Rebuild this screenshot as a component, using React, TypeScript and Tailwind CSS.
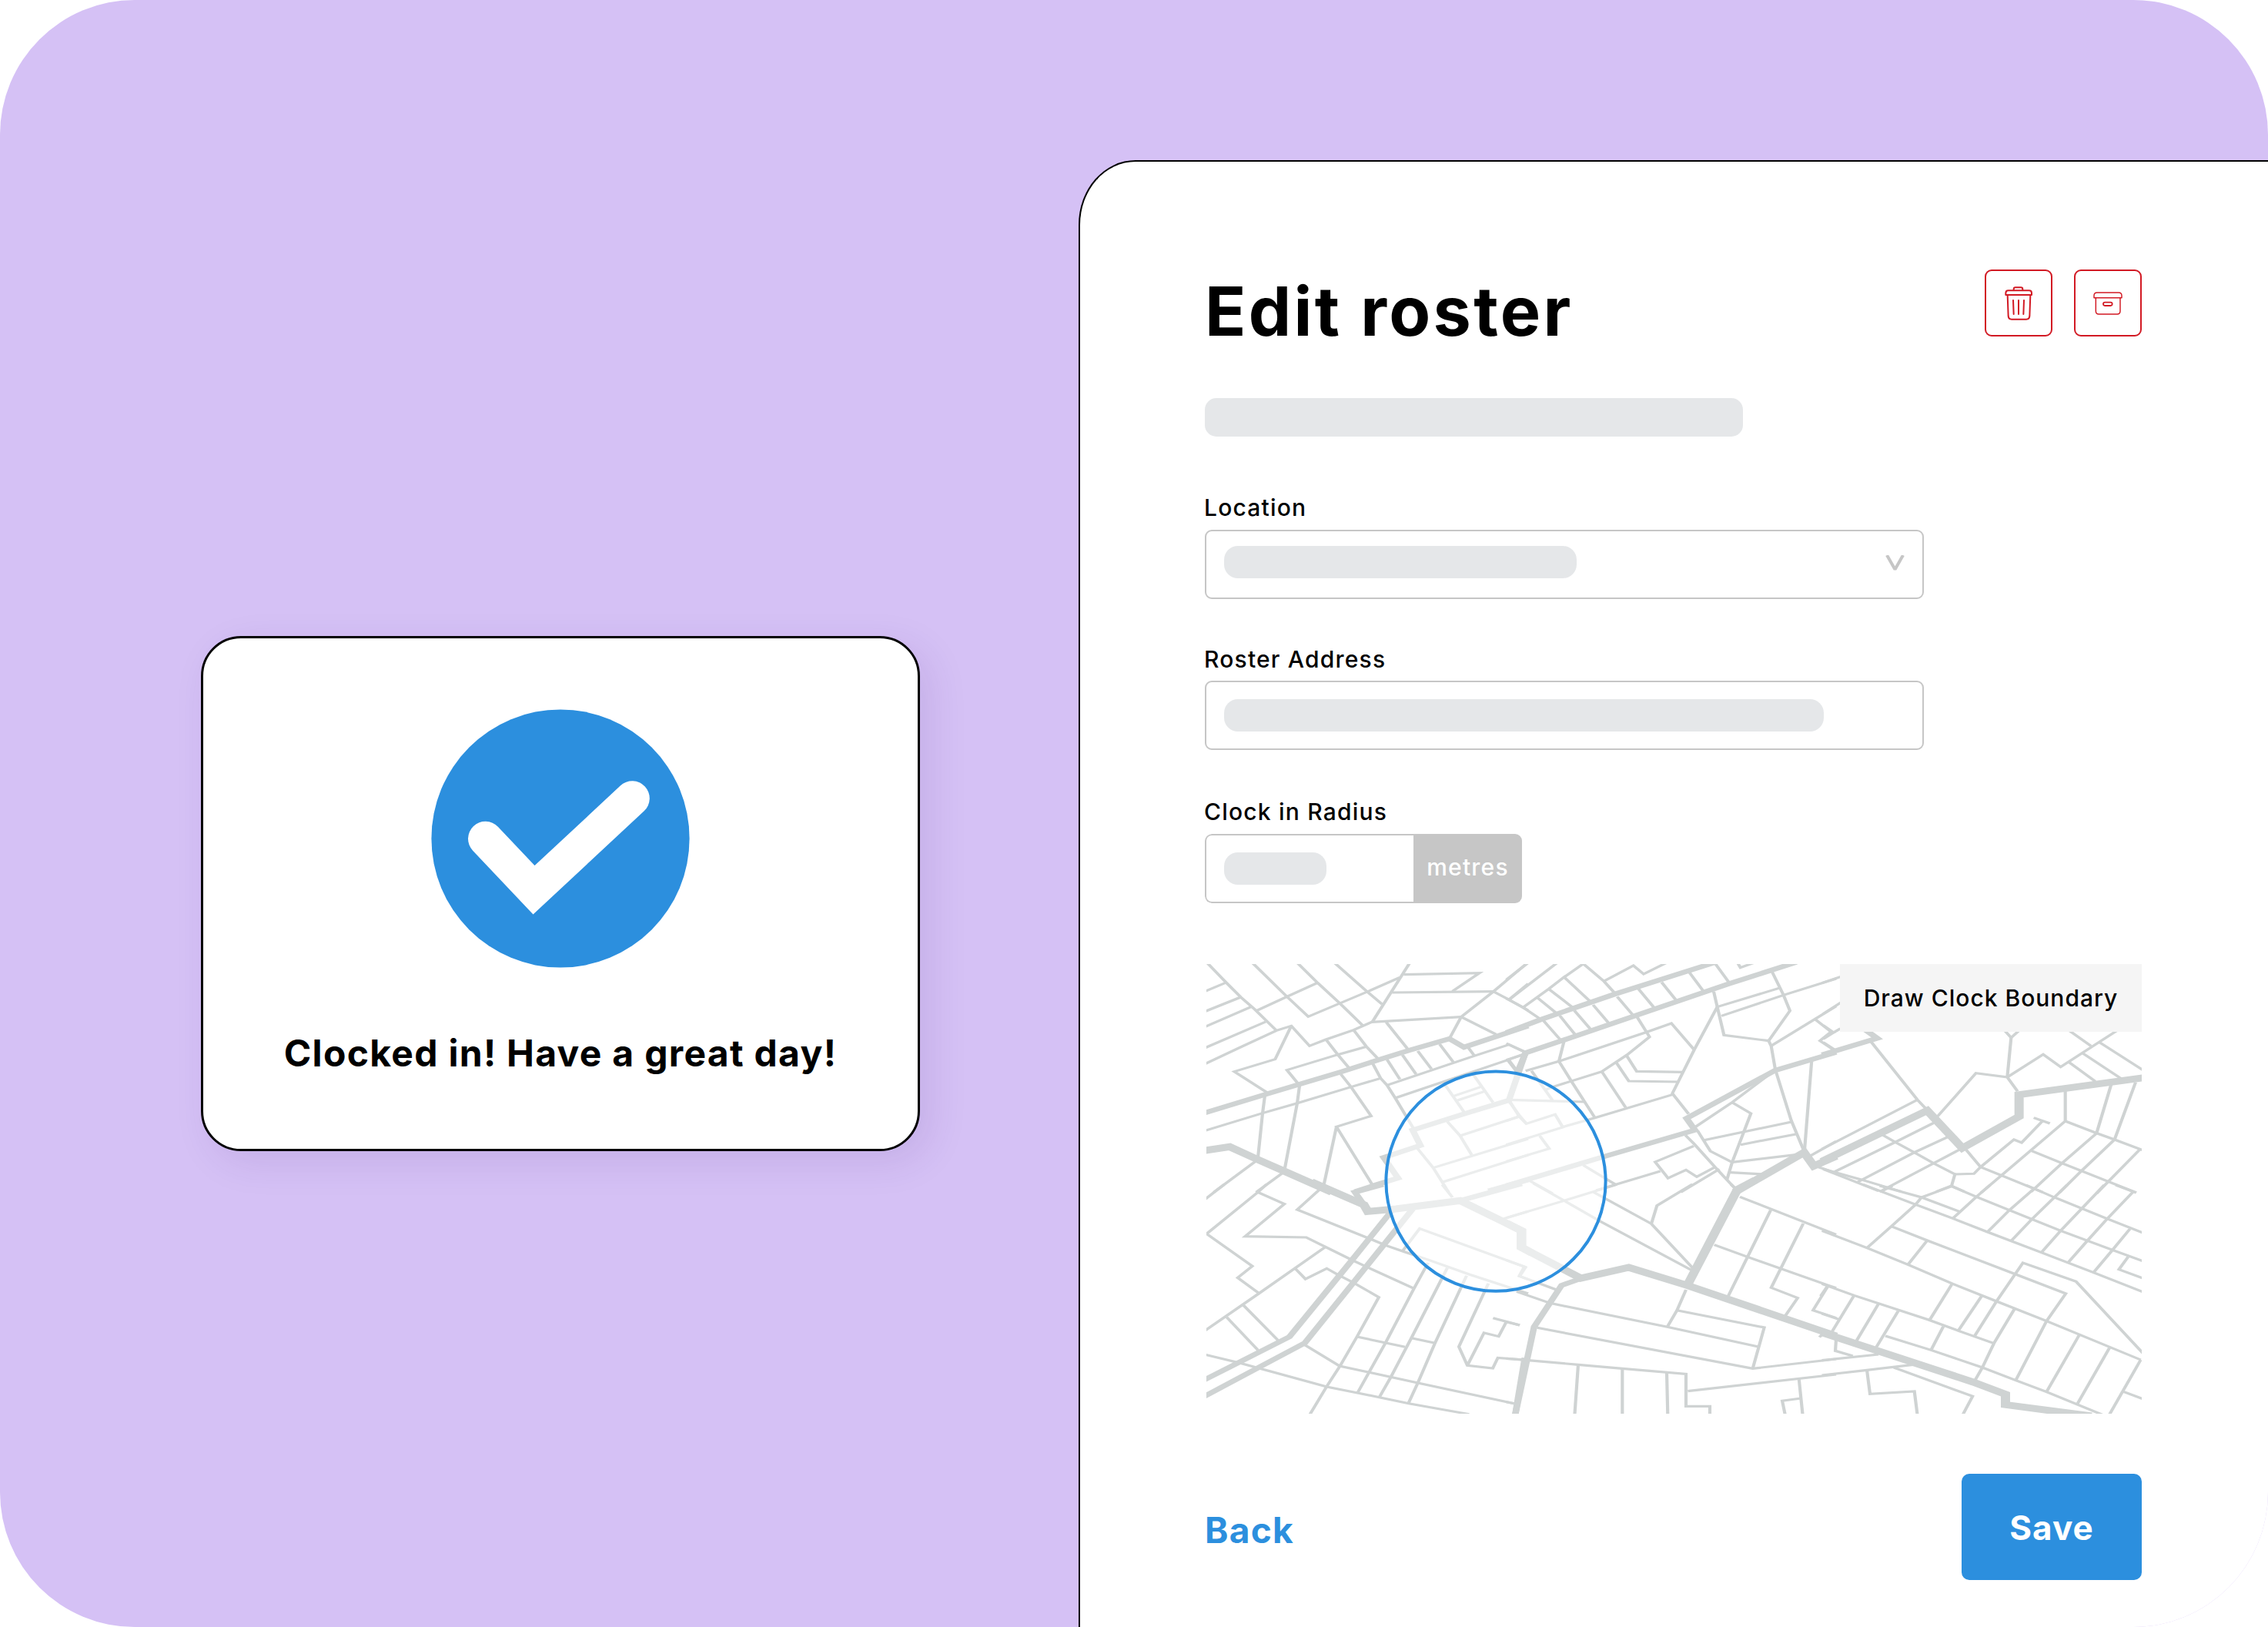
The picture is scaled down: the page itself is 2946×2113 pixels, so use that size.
import React from "react";

/* Street map: every tile holds its streets in tile units (3 units = 1px). */
type Tile = { x: number; y: number; thin: string[]; medium: string[]; thick: string[] };

const tiles: Tile[] = [
  {
    x: 1560,
    y: 1245,
    thin: [
      "22,14 98,93 155,150 210,198 294,280",
      "10,130 98,93",
      "10,208 155,150",
      "10,268 195,188",
      "10,350 252,246",
      "10,413 150,347 294,280 352,262 423,340 487,315 595,278 665,247 1014,227",
      "352,262 289,392 130,440 258,522",
      "200,16 335,148 418,226 541,174 648,129 775,73",
      "375,16 454,94 541,174 630,260",
      "520,16 648,129 706,178",
      "815,14 668,246",
      "218,202 335,148 454,94",
      "790,62 1085,56 980,127",
      "745,132 1140,128",
      "1275,14 1140,128 1014,227 968,312",
      "1014,227 1150,295",
      "1140,128 1200,160 1275,202",
      "1200,160 1275,98",
      "645,343 533,374 335,434 381,490",
      "487,315 533,374 576,425",
      "595,278 645,343 690,390",
      "722,248 808,355",
      "10,672 240,602 375,563 585,500 700,466",
      "250,525 240,602 222,775",
      "385,488 375,563 327,815",
      "545,450 585,500 663,613 528,655 670,885",
      "528,655 478,885",
      "670,410 700,466 725,493 757,543 830,665",
      "725,493 1062,380 1200,335 1265,366",
      "757,543 1195,395 1265,370",
      "725,393 775,470",
      "785,375 838,450",
      "845,360 898,430",
      "930,333 983,403",
      "1042,347 1065,378",
      "1195,395 1230,440",
      "950,490 985,540 1025,598",
      "985,535 1090,500",
      "1000,552 1105,517",
      "1060,450 1138,560",
      "960,635 1010,690 1055,765",
      "1010,690 1240,615",
      "905,815 1275,702",
      "943,870 1275,765",
      "840,735 905,815 965,910",
      "1200,550 1240,615 1268,643",
      "212,790 50,910",
      "318,835 215,910",
    ],
    medium: [
      "10,602 258,527 381,490 550,440 690,395 808,358 968,312 1025,345 1275,262",
      "1265,365 1200,552 1025,605 825,668 855,728 712,775 768,855 670,885 600,908",
      "1120,905 1275,862",
    ],
    thick: ["10,748 112,733 215,780 320,826 510,910"],
  },
  {
    x: 1960,
    y: 1245,
    thin: [
      "-10,82 75,16",
      "0,160 188,16",
      "55,190 155,118 215,72 290,20 370,88 413,135",
      "-10,155 55,190 122,235",
      "370,88 485,27 525,60 618,14",
      "215,72 318,168",
      "155,118 248,190",
      "112,153 188,215",
      "135,242 202,318",
      "198,222 258,296",
      "255,202 318,275",
      "328,180 388,250",
      "422,148 485,222",
      "505,118 565,190",
      "595,92 650,160",
      "702,52 758,127",
      "800,14 857,92",
      "890,14 902,35 960,14",
      "1025,50 1070,142 1095,203 1012,320 838,298 812,188 798,128",
      "1052,115 812,188",
      "1275,78 1070,142 828,223",
      "812,188 722,355 637,525 700,605",
      "215,320 195,400 245,480 335,620",
      "65,437 195,400 540,285 633,252 722,355",
      "500,228 548,305 460,375 362,440 180,497 140,512",
      "362,440 455,580",
      "417,403 467,477 660,480",
      "457,375 498,439 680,442",
      "205,657 335,620 637,530",
      "88,437 170,552",
      "0,550 295,558",
      "0,555 40,610 68,643 180,607 210,657 -10,725",
      "-10,632 40,615",
      "120,690 157,740 -10,790",
      "290,805 415,880",
      "80,865 170,915",
      "340,903 590,828",
      "720,730 570,792 620,855 690,823 732,850 803,812",
      "688,688 720,720 803,812 890,905",
      "820,820 670,910",
      "735,670 785,750 870,793 850,860",
      "870,793 943,603 870,560",
      "720,660 870,560 1030,440",
      "757,708 1105,635",
      "903,725 1122,683",
      "870,793 1150,760",
      "862,833 990,840",
      "1012,320 1022,340 1038,432 1100,630 1150,750",
      "1022,340 1275,185",
      "1192,235 1255,285 1212,320 1275,362",
      "1180,395 1152,745",
      "1175,768 1275,712",
      "1200,810 1275,835",
      "-10,395 60,372",
      "-10,330 60,362",
      "0,395 30,435",
    ],
    medium: [
      "-10,288 122,238 413,138 805,14",
      "30,450 65,367 205,320 857,98 1120,14",
      "-10,885 375,770 725,668 692,622 1038,435 1275,365",
    ],
    thick: ["1275,770 1188,808 1150,755 880,910"],
  },
  {
    x: 2370,
    y: 1245,
    thin: [
      "-10,95 70,68",
      "-5,215 65,170",
      "-5,260 35,288 -5,313",
      "35,288 62,272",
      "-5,326 40,355",
      "180,322 362,550 400,590",
      "440,615 590,446 712,462 752,517",
      "700,278 727,308 760,278",
      "727,308 712,462",
      "712,462 852,373 920,422 1070,325 1140,280",
      "950,278 1038,340",
      "1070,325 1245,437",
      "1005,368 1155,467",
      "952,403 1055,478",
      "938,515 938,633 610,912",
      "938,633 1055,678 1130,705 1245,748",
      "1117,490 1060,680 925,797 805,908",
      "1212,482 1130,705 1000,828 915,912",
      "1230,742 1060,915",
      "805,748 925,797 1105,868 1215,912",
      "552,745 608,812 690,845 850,910",
      "608,812 738,705 768,717 850,632",
      "815,620 878,642",
      "608,812 582,838 508,840 495,885 435,908",
      "495,885 545,908",
      "228,688 275,715 350,755 425,797 508,840",
      "-10,742 362,550",
      "40,830 275,715 425,640",
      "130,870 350,755 480,695",
      "215,908 425,797 530,742",
      "-5,820 140,860 300,908",
      "-5,820 210,905",
    ],
    medium: ["-10,375 205,310 160,278"],
    thick: ["-10,790 400,592 537,738 758,615 758,530 1250,463"],
  },
  {
    x: 1560,
    y: 1540,
    thin: [
      "90,-5 10,57",
      "255,-5 222,25 22,187 200,313 143,358 225,418",
      "222,25 325,71 172,197 410,201 485,238 590,290 650,318 830,400",
      "465,12 375,93 660,207 720,232 795,258 890,290 1045,345 1275,420",
      "10,568 225,420 485,238",
      "367,322 407,363 490,322 535,347 595,378 693,434 608,588 543,700 490,782 425,890",
      "165,465 300,602",
      "100,512 222,640",
      "10,656 150,690 235,713 490,783 610,807 695,824 810,848 1045,890",
      "405,620 540,702 845,768 1220,848",
      "608,588 720,612 795,628",
      "820,593 912,613",
      "885,300 830,400 720,610 610,807",
      "960,320 820,593 740,745 695,824",
      "1035,350 912,613 845,768 808,848",
      "1120,380 1005,627 1038,700 1137,711 1157,670 1260,678",
      "1038,700 1103,573 1160,587 1190,530",
      "1138,515 1242,543",
      "785,255 852,167 1260,315 1240,352 1275,365",
      "940,-5 980,45",
      "1180,128 1275,100",
    ],
    medium: [
      "710,-5 600,25 650,95",
      "1010,58 1250,-8",
      "745,95 580,300 345,588 10,758",
      "825,90 405,612 10,822",
      "1262,670 1224,895",
    ],
    thick: ["430,-15 635,74 650,100 760,90 1010,58 1250,175 1250,240 1290,262"],
  },
  {
    x: 1960,
    y: 1540,
    thin: [
      "-10,125 215,58 420,-5",
      "95,-10 215,58 355,138 710,328",
      "330,25 555,148 718,322",
      "555,148 577,77 715,-6",
      "865,-6 885,12",
      "900,43 1275,190",
      "800,230 930,277 1245,388 1275,398",
      "1020,95 930,277 852,435",
      "1147,147 1022,397 1125,437 1073,512",
      "1245,388 1185,485 1275,515",
      "690,405 655,485 617,550",
      "655,485 995,552 950,712",
      "30,412 160,457 617,550 975,628",
      "110,553 950,712 1275,675",
      "-10,673 75,680 270,697 442,712 690,733 690,859 783,859 783,895",
      "697,800 1275,735",
      "270,697 256,895",
      "442,712 442,895",
      "615,727 619,895",
      "1130,750 1145,895",
      "1138,828 1065,838 1077,895",
      "-10,530 42,543",
      "-10,842 20,848",
      "-10,290 65,317 42,352 185,405",
    ],
    medium: ["285,360 205,388 98,550 24,895"],
    thick: [
      "-10,145 48,175 48,240 280,360 467,318 695,388 1275,585",
      "695,388 890,15 960,-22",
    ],
  },
  {
    x: 2370,
    y: 1540,
    thin: [
      "150,-5 355,73 500,127 635,180 845,260 1048,338 1245,415",
      "215,0 378,45 525,100",
      "220,22 265,0",
      "495,2 378,45 355,73 260,158 165,242",
      "495,2 592,43 720,95 920,175 1122,250 1245,295",
      "645,-3 592,43 500,127",
      "820,8 720,95 635,180",
      "945,-3 808,130 727,215",
      "1090,-3 920,175 845,260",
      "1135,-3 1203,23 1100,130 1025,213 950,298",
      "785,-3 895,45 1100,128 1245,185",
      "1190,168 1122,250 1048,338",
      "1183,277 1147,326 1245,362",
      "-10,175 165,242 325,307 500,382 670,450 865,527 1232,678",
      "260,158 400,213 745,345 940,420 865,527 745,758",
      "400,213 325,307",
      "585,585 670,450 773,300 980,373 1245,657",
      "-10,382 115,427 405,522 522,565 660,614",
      "12,390 -15,430",
      "115,427 27,572",
      "210,460 125,603",
      "-10,498 55,520",
      "287,488 202,628",
      "237,585 415,640 615,708 745,758 865,803 1085,893",
      "497,382 410,522",
      "612,430 522,563",
      "463,548 415,640",
      "740,480 660,614 615,708 585,760",
      "992,582 865,803",
      "1110,632 985,850",
      "1232,678 1108,895",
      "1165,802 1245,832",
      "45,600 42,643 110,663",
      "-10,680 210,657",
      "-10,738 165,718 345,697",
      "270,708 577,820 537,895",
      "165,718 177,811 350,801 362,895",
      "-5,575 -20,590",
    ],
    medium: [],
    thick: ["-10,572 580,765 705,812 705,853 1040,897"],
  },
];

/* Streets are foreshortened: strokes are wider across x than across y. */
const STRETCH = 1.33;
const squeeze = (points: string) =>
  points
    .split(" ")
    .map((p) => {
      const [x, y] = p.split(",").map(Number);
      return `${(x / STRETCH).toFixed(1)},${y}`;
    })
    .join(" ");

function Streets({ lines, width }: { lines: string[]; width: number }) {
  return (
    <g strokeWidth={width}>
      {lines.map((l) => (
        <polyline key={l} points={squeeze(l)} />
      ))}
    </g>
  );
}

function StreetMap() {
  return (
    <svg className="block h-[584px] w-[1217px]" viewBox="1565 1252 1217 584">
      <defs>
        <clipPath id="frame">
          <rect x="1567" y="1252" width="1215" height="584" />
        </clipPath>
      </defs>
      <g clipPath="url(#frame)" fill="none" stroke="#cfd3d3" strokeMiterlimit={6}>
        {tiles.map((t) => (
          <g key={`${t.x}-${t.y}`} transform={`translate(${t.x} ${t.y}) scale(${STRETCH / 3} ${1 / 3})`}>
            <Streets lines={t.thin} width={9.4} />
            <Streets lines={t.medium} width={19} />
            <Streets lines={t.thick} width={27} />
          </g>
        ))}
      </g>
      <circle cx="1943" cy="1534.2" r="142.6" fill="#fff" fillOpacity=".58" stroke="#2c8fde" strokeWidth="4" />
    </svg>
  );
}

function Skeleton({ className }: { className: string }) {
  return <div className={`bg-[#e5e7e9] ${className}`} />;
}

function Label({ children }: { children: React.ReactNode }) {
  return <div className="-ml-px text-[30px] leading-[40px] font-medium tracking-[1.2px] text-black">{children}</div>;
}

function TrashIcon() {
  return (
    <svg className="h-[50px] w-[40px]" viewBox="127 115 120 150" fill="none" stroke="#d21a24" strokeWidth="6" strokeLinecap="round" strokeLinejoin="round">
      <path d="M168 139V135Q168 128 175 128H196Q203 128 203 135V139" />
      <path d="M137 157V150Q137 140 147 140H228Q238 140 238 150V157Z" />
      <path d="M144 158L147 240Q148 252 160 252H217Q229 252 230 240L233 158" />
      <path d="M166 178L168 232M187 178V232M208 178L206 232" />
    </svg>
  );
}

function ArchiveIcon() {
  return (
    <svg className="h-[40px] w-[44px]" viewBox="469 131 132 120" fill="none" stroke="#d21a24" strokeWidth="4.4" strokeLinejoin="round">
      <path d="M481 169V161Q481 149 493 149H577Q589 149 589 161V169Z" />
      <path d="M488 169V221Q488 233 500 233H571Q583 233 583 221V169" />
      <rect x="517" y="187" width="35" height="13" rx="6.5" strokeWidth="5.4" />
    </svg>
  );
}

function IconButton({ children }: { children: React.ReactNode }) {
  return (
    <button className="flex h-[87px] w-[88px] items-center justify-center rounded-[9px] border-2 border-[#d21a24] bg-white">
      {children}
    </button>
  );
}

export default function App() {
  return (
    <div className="h-[2113px] w-[2946px] overflow-hidden bg-white font-['Inter',sans-serif]">
      <div className="flex h-full w-full overflow-hidden rounded-[175px] bg-[#d5c1f5]">
        <section className="w-[1401px] shrink-0 pt-[826px] pl-[261px]">
          <div className="flex h-[669px] w-[934px] flex-col items-center rounded-[52px] border-[3px] border-black bg-white pt-[92px] shadow-[14px_14px_50px_rgba(60,20,120,0.1)]">
            <svg className="size-[336px]" viewBox="560.5 920.2 336 336" fill="none">
              <circle cx="728.5" cy="1088.2" r="167.6" fill="#2c8fde" />
              <path d="M631 1088.5L694 1155L821.8 1036" stroke="#fff" strokeWidth="45" strokeLinecap="round" />
            </svg>
            <p className="mt-[81px] text-[48px] leading-[60px] font-bold tracking-[1.3px] whitespace-nowrap text-black">Clocked in! Have a great day!</p>
          </div>
        </section>

        <main className="mt-[208px] flex grow flex-col rounded-tl-[74px_84px] border-t-2 border-l-2 border-black bg-white pt-[140px] pr-[164px] pl-[162px]">
          <header className="flex h-[108px] items-start justify-between">
            <h1 className="text-[88px] leading-[108px] font-bold tracking-[3.3px] whitespace-nowrap text-black">Edit roster</h1>
            <div className="flex gap-[28px]">
              <IconButton>
                <TrashIcon />
              </IconButton>
              <IconButton>
                <ArchiveIcon />
              </IconButton>
            </div>
          </header>

          <Skeleton className="mt-[59px] h-[50px] w-[699px] rounded-[15px]" />

          <div className="mt-[72px]">
            <Label>Location</Label>
            <div className="mt-[9px] flex h-[90px] w-[934px] items-start justify-between rounded-[9px] border-2 border-[#c6c6c6] pt-[19px] pr-[22px] pl-[23px]">
              <Skeleton className="h-[42px] w-[458px] rounded-[18px]" />
              <svg className="mt-[12px] h-[21px] w-[27px]" viewBox="0 0 27 21" fill="none" stroke="#c6c6c6" strokeWidth="4">
                <path d="M3 0L13.5 18.5L24 0" strokeLinejoin="bevel" />
              </svg>
            </div>
          </div>

          <div className="mt-[58px]">
            <Label>Roster Address</Label>
            <div className="mt-[8px] flex h-[90px] w-[934px] items-center rounded-[9px] border-2 border-[#c6c6c6] pl-[23px]">
              <Skeleton className="h-[42px] w-[779px] rounded-[18px]" />
            </div>
          </div>

          <div className="mt-[60px]">
            <Label>Clock in Radius</Label>
            <div className="mt-[9px] flex h-[90px] w-[412px] overflow-hidden rounded-[9px]">
              <div className="flex grow items-center rounded-l-[9px] border-2 border-r-0 border-[#c6c6c6] pl-[23px]">
                <Skeleton className="h-[42px] w-[133px] rounded-[18px]" />
              </div>
              <div className="flex w-[141px] items-center justify-center bg-[#c6c6c6] pb-[3px] text-[30px] font-medium tracking-[1.2px] text-white">metres</div>
            </div>
          </div>

          <div className="relative mt-[79px] h-[584px] w-[1217px]">
            <StreetMap />
            <button className="absolute top-0 right-0 flex h-[88px] w-[392px] items-center justify-center bg-[#f5f5f5] text-[30px] font-medium tracking-[1px] whitespace-nowrap text-black">
              Draw Clock Boundary
            </button>
          </div>

          <footer className="mt-[78px] flex h-[138px] items-center justify-between">
            <button className="mt-[8px] text-[46px] leading-[60px] font-bold tracking-[1.3px] text-[#2c8fde]">Back</button>
            <button className="flex h-[138px] w-[234px] items-center justify-center rounded-[10px] bg-[#2c8fde] pt-[2px] text-[44px] font-bold tracking-[1px] text-white">
              Save
            </button>
          </footer>
        </main>
      </div>
    </div>
  );
}
